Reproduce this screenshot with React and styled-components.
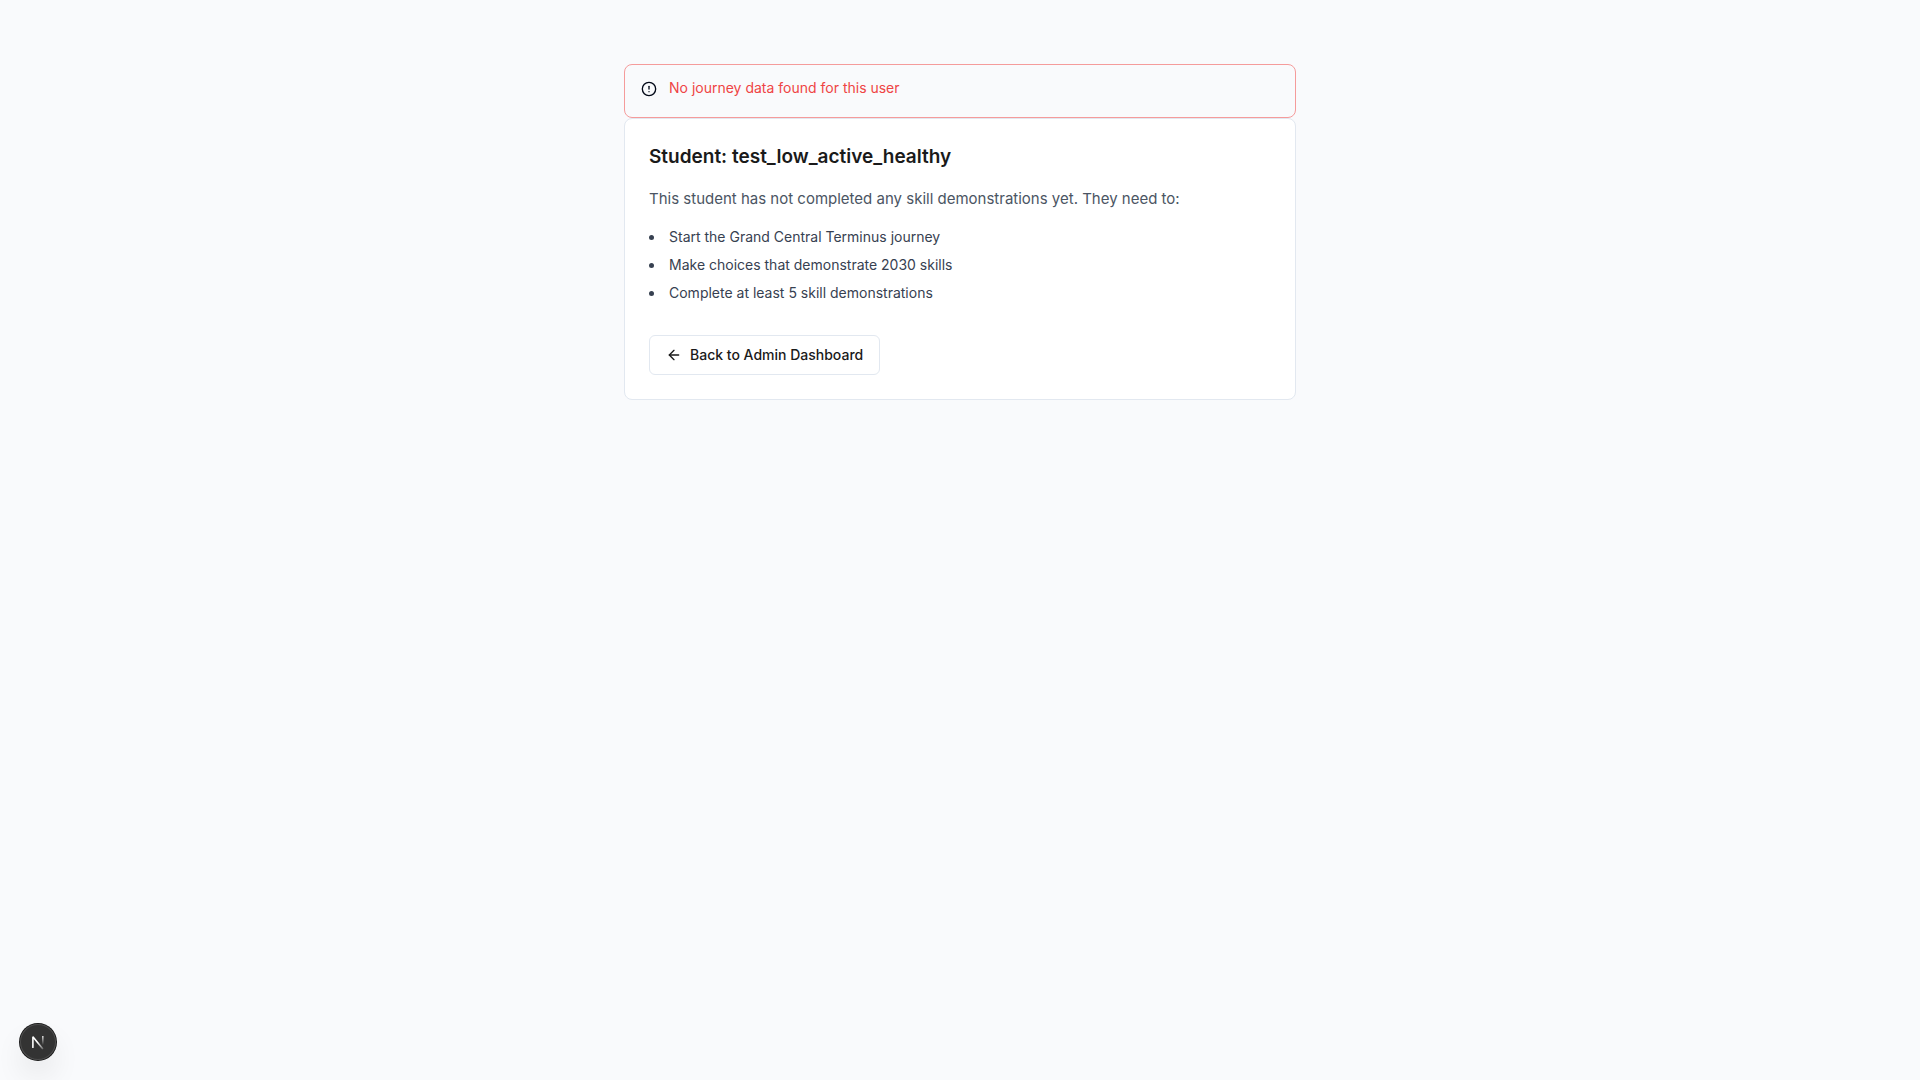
import React from "react";
import styled, { createGlobalStyle } from "styled-components";
import { ArrowLeft, CircleAlert } from "lucide-react";

const GlobalStyle = createGlobalStyle`
  *, *::before, *::after { box-sizing: border-box; }
  body {
    margin: 0;
    background: #f9fafc;
    color: #1a1a1a;
    font-family: Inter, "Liberation Sans", sans-serif;
    font-size: 15px;
    line-height: 24px;
    -webkit-font-smoothing: antialiased;
  }
  h1, p, ul { margin: 0; padding: 0; }
`;

const Page = styled.main`
  min-height: 100vh;
  padding: 64px 16px;
  background: #f9fafc;
`;

const Container = styled.div`
  max-width: 672px;
  margin: 0 auto;
`;

const Alert = styled.div`
  display: flex;
  align-items: flex-start;
  gap: 12px;
  padding: 13px 16px 19px;
  border: 1px solid #f59b9b;
  border-radius: 8px;
  color: #ef4444;
  font-size: 14px;
  line-height: 20px;

  svg {
    flex: none;
    margin-top: 3px;
    color: #020817;
  }
`;

const Card = styled.section`
  padding: 24px;
  border: 1px solid #e2e8f0;
  border-radius: 8px;
  background: #fff;
`;

const Title = styled.h1`
  font-size: 19px;
  font-weight: 600;
  line-height: 28px;
`;

const Intro = styled.p`
  margin: 16px 0;
  color: #4b5563;
`;

const Steps = styled.ul`
  display: grid;
  gap: 8px;
  list-style: disc inside;
  color: #374151;
  font-size: 14px;
  line-height: 20px;
`;

const BackButton = styled.button`
  display: inline-flex;
  align-items: center;
  gap: 8px;
  height: 40px;
  margin-top: 32px;
  padding: 0 16px;
  border: 1px solid #e2e8f0;
  border-radius: 6px;
  background: #fff;
  color: #1a1a1a;
  font: 500 14px/20px Inter, "Liberation Sans", sans-serif;
  vertical-align: top;
  cursor: pointer;
`;

const DevToolsButton = styled.button`
  position: fixed;
  left: 20px;
  bottom: 20px;
  display: grid;
  place-items: center;
  width: 36px;
  height: 36px;
  padding: 0;
  border: 0;
  border-radius: 50%;
  background: #333;
  box-shadow: 0 0 0 1px #171717, inset 0 0 0 1px #4d4d4d, 0 16px 32px -8px rgba(0, 0, 0, 0.24);
  cursor: pointer;
`;

const steps = [
  "Start the Grand Central Terminus journey",
  "Make choices that demonstrate 2030 skills",
  "Complete at least 5 skill demonstrations",
];

function NextMark() {
  return (
    <svg width="36" height="36" viewBox="0 0 36 36" fill="none" aria-hidden="true">
      <defs>
        <linearGradient id="stem" x1="23" y1="12" x2="23" y2="21" gradientUnits="userSpaceOnUse">
          <stop stopColor="#fff" stopOpacity="0.8" />
          <stop offset="1" stopColor="#fff" stopOpacity="0" />
        </linearGradient>
        <linearGradient id="diagonal" x1="18" y1="18" x2="24" y2="25" gradientUnits="userSpaceOnUse">
          <stop stopColor="#fff" />
          <stop offset="1" stopColor="#fff" stopOpacity="0.2" />
        </linearGradient>
      </defs>
      <path d="M12.9 24V12.7L22.9 25" stroke="url(#diagonal)" strokeWidth="1.6" strokeLinejoin="bevel" />
      <path d="M22.8 12V21" stroke="url(#stem)" strokeWidth="1.6" />
    </svg>
  );
}

export default function App() {
  return (
    <>
      <GlobalStyle />
      <Page>
        <Container>
          <Alert role="alert">
            <CircleAlert size={16} />
            <p>No journey data found for this user</p>
          </Alert>
          <Card>
            <Title>Student: test_low_active_healthy</Title>
            <Intro>This student has not completed any skill demonstrations yet. They need to:</Intro>
            <Steps>
              {steps.map((step) => (
                <li key={step}>{step}</li>
              ))}
            </Steps>
            <BackButton type="button">
              <ArrowLeft size={16} />
              Back to Admin Dashboard
            </BackButton>
          </Card>
        </Container>
      </Page>
      <DevToolsButton type="button" aria-label="Open Next.js Dev Tools">
        <NextMark />
      </DevToolsButton>
    </>
  );
}
